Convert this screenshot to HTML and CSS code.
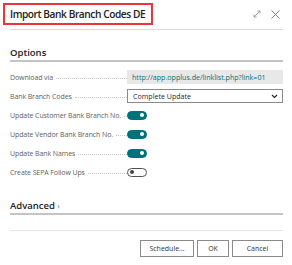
FILE: index.html
```html
<!DOCTYPE html>
<html lang="en">
<head>
    <meta charset="UTF-8">
    <title>Import Bank Branch Codes DE</title>
    <link rel="stylesheet" href="styles.css">
</head>
<body>
    <div class="dialog">
        <div class="header">
            <div class="title">Import Bank Branch Codes DE</div>
            <div class="header-icons">
                <svg width="8" height="8" viewBox="0 0 8 8">
                    <path d="M1 7 L7 1 M4.5 1 H7 V3.5 M1 4.5 V7 H3.5" fill="none" stroke="#8a8a8a" stroke-width="0.8"/>
                </svg>
                <svg width="9" height="9" viewBox="0 0 9 9">
                    <path d="M0.5 0.5 L8.5 8.5 M8.5 0.5 L0.5 8.5" fill="none" stroke="#707070" stroke-width="0.9"/>
                </svg>
            </div>
        </div>
        <div class="header-line"></div>

        <div class="section">
            <div class="section-title">Options</div>
            <div class="rows">
                <div class="row">
                    <div class="label"><span>Download via</span><i class="leader"></i></div>
                    <div class="field readonly">http://app.opplus.de/linklist.php?link=01</div>
                </div>
                <div class="row">
                    <div class="label"><span>Bank Branch Codes</span><i class="leader"></i></div>
                    <div class="field select">
                        <span>Complete Update</span>
                        <svg width="7" height="5" viewBox="0 0 7 5">
                            <path d="M1 1 L3.5 3.5 L6 1" fill="none" stroke="#222" stroke-width="1.1"/>
                        </svg>
                    </div>
                </div>
                <div class="row">
                    <div class="label"><span>Update Customer Bank Branch No.</span><i class="leader"></i></div>
                    <div class="toggle on"></div>
                </div>
                <div class="row">
                    <div class="label"><span>Update Vendor Bank Branch No.</span><i class="leader"></i></div>
                    <div class="toggle on"></div>
                </div>
                <div class="row">
                    <div class="label"><span>Update Bank Names</span><i class="leader"></i></div>
                    <div class="toggle on"></div>
                </div>
                <div class="row">
                    <div class="label"><span>Create SEPA Follow Ups</span><i class="leader"></i></div>
                    <div class="toggle"></div>
                </div>
            </div>
        </div>

        <div class="advanced">
            <div class="section-title">Advanced<span class="chevron">&rsaquo;</span></div>
        </div>

        <div class="footer">
            <button>Schedule...</button>
            <button class="ok">OK</button>
            <button>Cancel</button>
        </div>
    </div>
</body>
</html>
```

FILE: styles.css
```css
body {
    margin: 0;
    background: #fff;
    font-family: "Open Sans", "Noto Sans", sans-serif;
    color: #212121;
}
.dialog {
    width: 292px;
    height: 265px;
}
.header {
    display: flex;
    justify-content: space-between;
    align-items: center;
    padding: 3px 12px 0 3px;
}
.title {
    border: 2px solid #e8343a;
    height: 18px;
    padding: 0 6px 0 5px;
    font-size: 10.2px;
    font-weight: 600;
    line-height: 18px;
    letter-spacing: -0.45px;
    white-space: nowrap;
}
.header-icons {
    display: flex;
    align-items: center;
    gap: 10px;
}
.header-line {
    margin: 4px 9px 0 10px;
    border-top: 1px solid #dcdcdc;
}
.section {
    padding: 0 9px 0 10px;
}
.section-title {
    font-size: 9.5px;
    font-weight: 600;
    color: #212121;
    line-height: 13px;
    padding-bottom: 1px;
    border-bottom: 2px solid #c4c4c4;
}
.section > .section-title {
    margin-top: 16px;
}
.rows {
    margin-top: 8px;
    display: flex;
    flex-direction: column;
    gap: 5px;
}
.row {
    display: flex;
    align-items: center;
    height: 14px;
}
.label {
    width: 117px;
    display: flex;
    align-items: center;
    font-size: 7px;
    letter-spacing: -0.1px;
    color: #616161;
    white-space: nowrap;
}
.leader {
    flex: 1;
    margin: 2px 0 0 3px;
    border-bottom: 1px dotted #c8c8c8;
}
.field {
    flex: 1;
    height: 14px;
    box-sizing: border-box;
    display: flex;
    align-items: center;
    padding: 0 5px;
    font-size: 7.1px;
    white-space: nowrap;
}
.readonly {
    background: #e8e8e8;
    color: #00727a;
}
.select {
    border: 1px solid #8a8a8a;
    color: #2a2a2a;
    justify-content: space-between;
    padding-right: 4px;
}
.toggle {
    width: 20px;
    height: 9px;
    box-sizing: border-box;
    border-radius: 5px;
    border: 1px solid #505050;
    position: relative;
    background: #fff;
}
.toggle::after {
    content: "";
    position: absolute;
    top: 1.5px;
    left: 2px;
    width: 4px;
    height: 4px;
    border-radius: 50%;
    background: #3c4150;
}
.toggle.on {
    background: #00727a;
    border-color: #00727a;
}
.toggle.on::after {
    left: auto;
    right: 2px;
    background: #fff;
}
.advanced {
    padding: 0 9px 0 10px;
    margin-top: 20px;
}
.chevron {
    font-weight: 400;
    color: #888;
    margin-left: 2px;
}
.footer {
    margin: 15px 9px 0 10px;
    border-top: 1px solid #e6e6e6;
    padding-top: 9px;
    display: flex;
    justify-content: flex-end;
    gap: 3px;
}
button {
    font-family: "Open Sans", "Noto Sans", sans-serif;
    font-size: 7px;
    color: #333;
    background: #fff;
    border: 1px solid #8a8a8a;
    height: 17px;
    width: 54px;
    padding: 0;
    border-radius: 0;
}
button.ok {
    width: 32px;
}
button:last-child {
    width: 51px;
}
```
